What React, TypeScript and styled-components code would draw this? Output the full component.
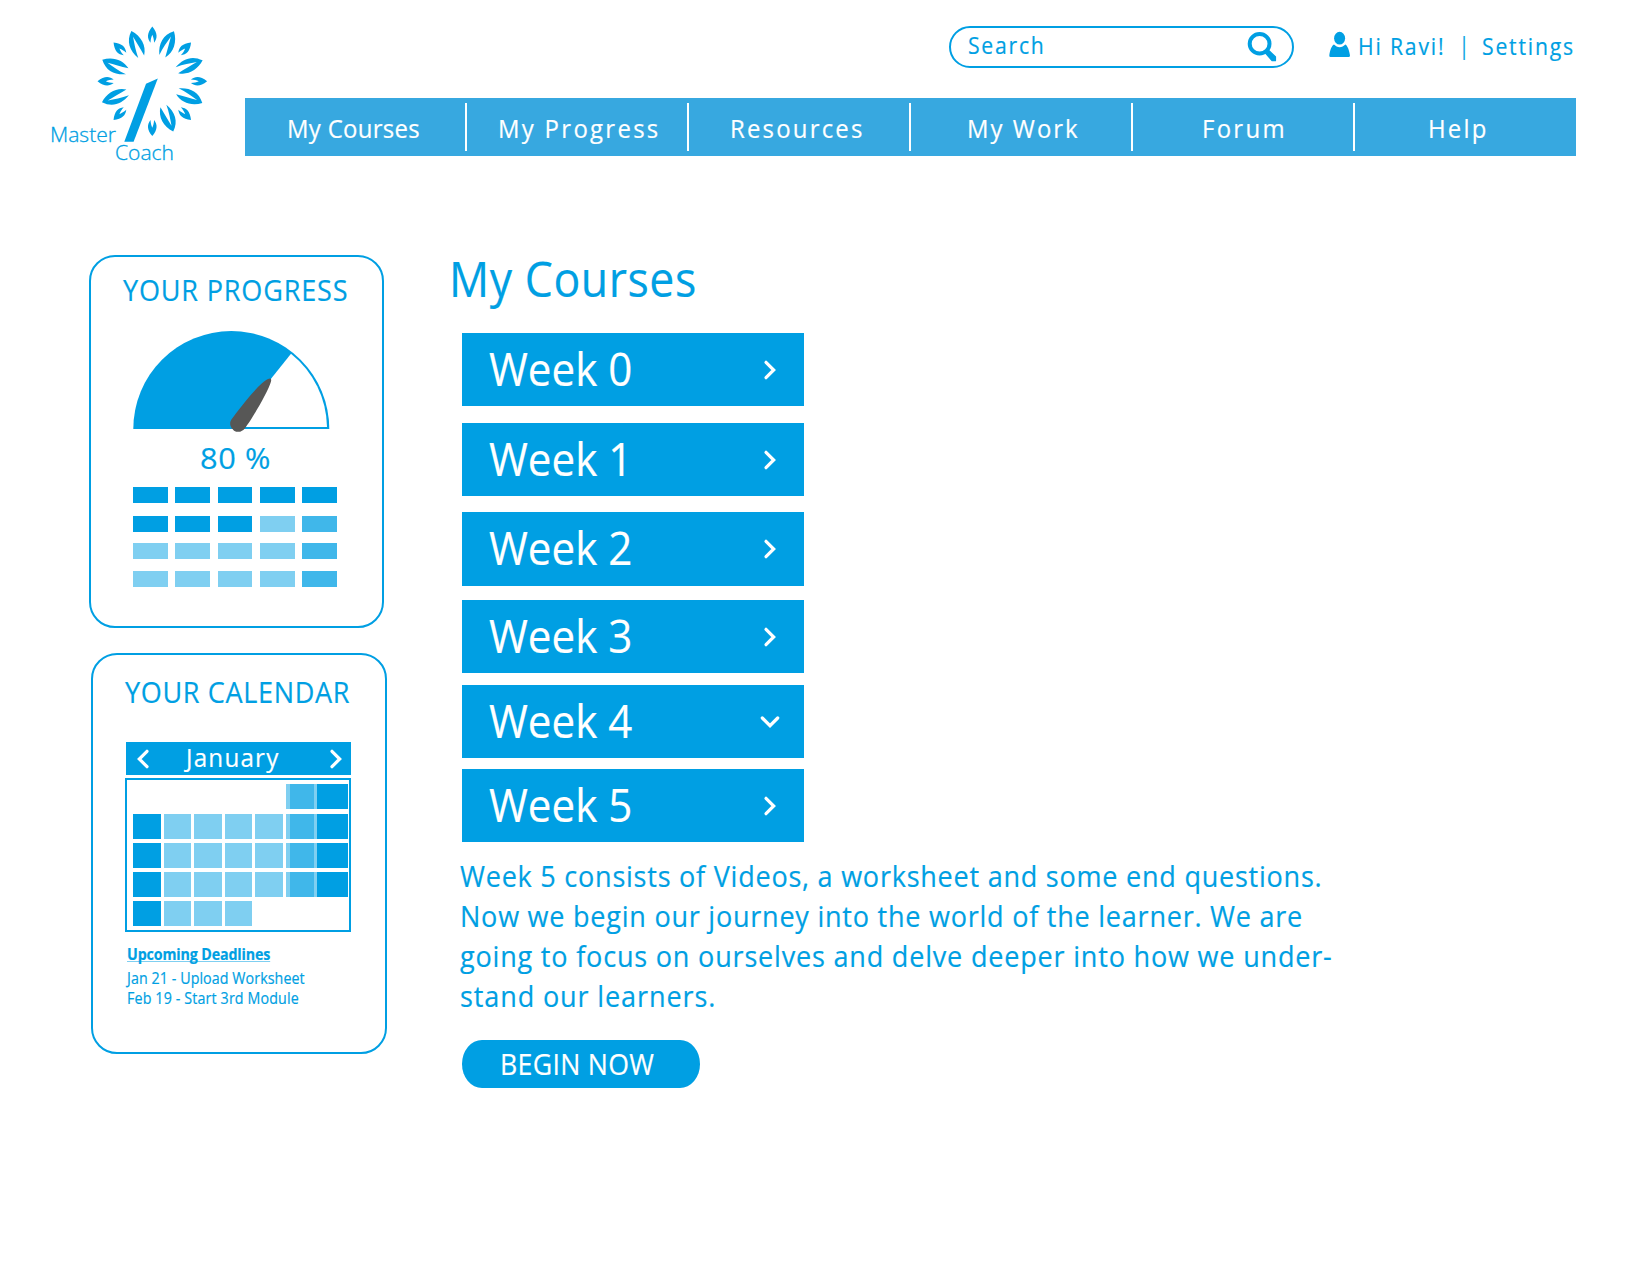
import styled, { createGlobalStyle } from "styled-components";

const BLUE = "#009fe3";
const MID = "#40b7ea";
const PALE = "#7fcff1";

const GlobalStyle = createGlobalStyle`
  body {
    margin: 0;
    background: #fff;
    color: ${BLUE};
    font-family: "Open Sans", "Noto Sans", sans-serif;
  }
  * { box-sizing: border-box; }
`;

const Page = styled.div`
  width: 1650px;
  height: 1275px;
  overflow: hidden;
`;

/* Slightly narrowed lettering used throughout the site. */
const Lettering = styled.span<{
  $size: number;
  $line: number;
  $tracking?: number;
  $squeeze?: number;
}>`
  display: block;
  flex: none;
  white-space: nowrap;
  font-size: ${(p) => p.$size}px;
  line-height: ${(p) => p.$line}px;
  letter-spacing: ${(p) => p.$tracking ?? 0}px;
  -webkit-text-stroke: 0.2px currentColor;
  transform: scaleX(${(p) => p.$squeeze ?? 0.92});
  transform-origin: left center;
`;

/* ---------- header ---------- */

const Header = styled.header`
  display: grid;
  grid-template-columns: 245px 1331px;
  height: 156px;
`;

const LogoBox = styled.div`
  padding: 15px 0 0 40px;
  height: 156px;
  svg { overflow: visible; }
`;

const HeaderRight = styled.div`
  display: flex;
  flex-direction: column;
`;

const TopRow = styled.div`
  display: flex;
  align-items: flex-start;
  height: 98px;
  padding: 26px 0 0 704px;
`;

const SearchBox = styled.div`
  display: flex;
  align-items: flex-start;
  justify-content: space-between;
  flex: none;
  width: 345px;
  height: 42px;
  padding: 0 15px 0 17px;
  border: 2px solid ${BLUE};
  border-radius: 21px;
  svg { margin-top: 4px; }
`;

const UserArea = styled.div`
  display: flex;
  margin-left: 35px;
  svg { margin: 5px 7px 0 0; flex: none; }
`;

const UserItem = styled.div<{ $width: number }>`
  width: ${(p) => p.$width}px;
`;

const Nav = styled.nav`
  display: flex;
  align-items: center;
  height: 58px;
  background: #37a8e0;
`;

const NavItem = styled.a<{ $inset: number; $last?: boolean }>`
  width: ${(p) => (p.$last ? 220 : 222.1)}px;
  height: 48px;
  padding-left: ${(p) => p.$inset}px;
  border-right: ${(p) => (p.$last ? "0" : "2px solid #fff")};
  color: #fff;
`;

/* ---------- columns ---------- */

const Main = styled.main`
  display: flex;
  align-items: flex-start;
`;

const Aside = styled.aside`
  display: flex;
  flex-direction: column;
  gap: 25px;
  width: 448px;
  padding-top: 99px;
`;

const Panel = styled.section<{ $left: number; $width: number; $height: number; $top: number }>`
  width: ${(p) => p.$width}px;
  height: ${(p) => p.$height}px;
  margin-left: ${(p) => p.$left}px;
  padding-top: ${(p) => p.$top}px;
  border: 2px solid ${BLUE};
  border-radius: 26px;
`;

const PanelTitle = styled.div`
  padding-left: 32.3px;
`;

const GaugeBox = styled.div`
  height: 104px;
  margin: 20.5px 0 9px 41px;
  svg { display: block; }
`;

const Percent = styled.div`
  padding-left: 109px;
`;

const BlockGrid = styled.div`
  display: grid;
  grid-template-columns: repeat(5, 34.7px);
  grid-template-rows: 29px 27px 28px 16px;
  column-gap: 7.5px;
  margin: 14px 0 0 42.3px;
`;

const Block = styled.i<{ $tone: string }>`
  height: 15.5px;
  background: ${(p) => p.$tone};
`;

const MonthBar = styled.div`
  display: flex;
  align-items: center;
  justify-content: space-between;
  width: 225px;
  height: 33px;
  margin: 30px 0 3px 33px;
  padding: 0 5px 0 7px;
  background: ${BLUE};
  color: #fff;
`;

const MonthName = styled.div`
  width: 107px;
  margin-top: -3px;
`;

const MonthGrid = styled.div`
  display: grid;
  grid-template-columns: repeat(5, 27.7px) 62px;
  grid-template-rows: 30px 29px 29px 29px 25px;
  column-gap: 2.8px;
  width: 226px;
  height: 154px;
  margin-left: 32.3px;
  padding: 4px 0 0 6px;
  border: 2px solid ${BLUE};
`;

const Day = styled.i<{ $tone: string }>`
  height: 25px;
  background: ${(p) => p.$tone};
`;

const Weekend = styled.i`
  grid-column: 6;
  height: 25px;
  background: linear-gradient(
    90deg,
    ${PALE} 0 4px,
    ${MID} 4px 28px,
    ${PALE} 28px 31px,
    ${BLUE} 31px
  );
`;

const Deadlines = styled.div`
  margin: 11.5px 0 0 33.7px;
`;

const DeadlineHeading = styled.div`
  margin-bottom: 4px;
  font-weight: 700;
  text-decoration: underline 1px ${PALE};
  text-underline-offset: 1px;
  text-decoration-skip-ink: none;
`;

/* ---------- course list ---------- */

const Content = styled.section`
  padding-top: 92px;
`;

const PageTitle = styled.h1`
  margin: 0;
  padding-left: 0.8px;
  font-weight: 400;
`;

const WeekList = styled.div`
  padding: 25px 0 0 14.4px;
`;

const WeekRow = styled.button<{ $gap: number }>`
  display: flex;
  align-items: flex-start;
  justify-content: space-between;
  width: 342px;
  height: 73.3px;
  margin: ${(p) => p.$gap}px 0 0;
  padding: 0 24px 0 26.5px;
  border: 0;
  background: ${BLUE};
  color: #fff;
  font-family: inherit;
  text-align: left;
  svg { margin-top: 27px; flex: none; }
`;

const Description = styled.div`
  padding: 13.5px 0 0 12px;
`;

const BeginButton = styled.button`
  display: block;
  width: 238px;
  height: 48.5px;
  margin: 24px 0 0 14.3px;
  padding: 0 0 1px 38px;
  border: 0;
  border-radius: 20px / 24px;
  background: ${BLUE};
  color: #fff;
  font-family: inherit;
  text-align: left;
`;

/* ---------- drawings ---------- */

const BIG_LEAF =
  "M0.4-54.5C-8.5-47-9-37-3.8-27C-3.4-35-1.8-42-.3-48.5C.6-42 1.6-35 2.6-27C8.5-35 7.5-46 .4-54.5Z";
const SMALL_LEAF =
  "M0-54.8C-5.6-48-5.2-43-1.8-38.6C-1.6-42-1-44 0-46.5C1-44 1.6-42 1.8-38.6C5.2-43 5.6-48 0-54.8Z";

function Logo() {
  return (
    <svg width="200" height="141" viewBox="0 0 200 141" fill={BLUE}>
      <g transform="translate(112.3 66.3)">
        {[0, 45, 90, 135, 180, 225, 270, 315].map((a) => (
          <path key={a} d={SMALL_LEAF} transform={`rotate(${a})`} />
        ))}
        {[23, 67, 113, 157, 247, 293, 337].map((a) => (
          <path key={a} d={BIG_LEAF} transform={`rotate(${a})`} />
        ))}
      </g>
      <path d="M84.3 126.8 106 68.8 117.8 63.6 93.6 126.8Z" />
      <g fontFamily="Open Sans" fontWeight="300" fontSize="20" stroke={BLUE} strokeWidth="0.3">
        <text x="10" y="127.3" textLength="66" lengthAdjust="spacingAndGlyphs">Master</text>
        <text x="75" y="144.7" textLength="59" lengthAdjust="spacingAndGlyphs">Coach</text>
      </g>
    </svg>
  );
}

function Magnifier() {
  return (
    <svg width="30" height="30" viewBox="0 0 30 30" fill="none" stroke={BLUE}>
      <ellipse cx="12.6" cy="11.8" rx="9.9" ry="9.7" strokeWidth="4" />
      <path d="M17.4 19.4 20.4 17.6 28.2 24.8V28.4H25.2Z" fill={BLUE} strokeWidth="1.8" strokeLinejoin="round" />
    </svg>
  );
}

function Person() {
  return (
    <svg width="22" height="27" viewBox="0 0 22 27" fill={BLUE}>
      <ellipse cx="10.6" cy="7.2" rx="5.5" ry="6.4" />
      <path d="M5 13.6C8 17 13.2 17 16.4 13.6C18.5 14.5 20.4 20 21 24.5Q21 26 19.6 26H1.6Q.2 26 .3 24.5C.8 20 2.6 14.5 5 13.6Z" />
    </svg>
  );
}

function Chevron({ turn = 0 }: { turn?: number }) {
  return (
    <svg width="20" height="20" viewBox="0 0 20 20" fill="none" stroke="#fff" strokeWidth="3.2">
      <path d="M6 2.3 13.7 10 6 17.7" strokeLinecap="round" transform={`rotate(${turn} 10 10)`} />
    </svg>
  );
}

function Gauge() {
  return (
    <svg width="200" height="104" viewBox="0 0 200 104">
      <path d="M1.3 99A98 98 0 0 1 197.3 99Z" fill={BLUE} />
      <path d="M100.5 97 159 23.7A96 96 0 0 1 195 97Z" fill="#fff" />
      <path
        d="M99.4 89.5C107 79 127 53 136 49C138.8 47.6 139.6 49 139 51.5C136.5 61 120 89 113.2 98A7.8 7.8 0 0 1 99.4 89.5Z"
        fill="#575756"
      />
    </svg>
  );
}

/* ---------- data ---------- */

const NAV = [
  { label: "My Courses", inset: 42, tracking: 0.35 },
  { label: "My Progress", inset: 31, tracking: 2.5 },
  { label: "Resources", inset: 40.5, tracking: 2.4 },
  { label: "My Work", inset: 56, tracking: 2.2 },
  { label: "Forum", inset: 69, tracking: 2.5 },
  { label: "Help", inset: 72.5, tracking: 2.4 },
];

const BLOCKS = [
  [BLUE, BLUE, BLUE, BLUE, BLUE],
  [BLUE, BLUE, BLUE, PALE, MID],
  [PALE, PALE, PALE, PALE, MID],
  [PALE, PALE, PALE, PALE, MID],
];

const WEEKS = [
  { label: "Week 0", gap: 0 },
  { label: "Week 1", gap: 16.4 },
  { label: "Week 2", gap: 16.4 },
  { label: "Week 3", gap: 14.2 },
  { label: "Week 4", gap: 11.9, open: true },
  { label: "Week 5", gap: 10.8 },
];

const LINES = [
  { text: "Week 5 consists of Videos, a worksheet and some end questions.", tracking: 0.82 },
  { text: "Now we begin our journey into the world of the learner. We are", tracking: 0.82 },
  { text: "going to focus on ourselves and delve deeper into how we under-", tracking: 0.87 },
  { text: "stand our learners.", tracking: 0.95 },
];

export default function App() {
  return (
    <Page>
      <GlobalStyle />
      <Header>
        <LogoBox>
          <Logo />
        </LogoBox>
        <HeaderRight>
          <TopRow>
            <SearchBox>
              <Lettering $size={23} $line={35} $tracking={1.9}>Search</Lettering>
              <Magnifier />
            </SearchBox>
            <UserArea>
              <Person />
              <UserItem $width={100.5}>
                <Lettering $size={23} $line={40} $tracking={2}>Hi Ravi!</Lettering>
              </UserItem>
              <UserItem $width={23}>
                <Lettering $size={23} $line={38} $squeeze={0.8}>|</Lettering>
              </UserItem>
              <UserItem $width={92}>
                <Lettering $size={23} $line={40} $tracking={1.95}>Settings</Lettering>
              </UserItem>
            </UserArea>
          </TopRow>
          <Nav>
            {NAV.map((n, i) => (
              <NavItem key={n.label} $inset={n.inset} $last={i === NAV.length - 1}>
                <Lettering $size={26} $line={50.5} $tracking={n.tracking}>{n.label}</Lettering>
              </NavItem>
            ))}
          </Nav>
        </HeaderRight>
      </Header>

      <Main>
        <Aside>
          <Panel $left={89} $width={295} $height={373} $top={12.5}>
            <PanelTitle>
              <Lettering $size={29.4} $line={40} $tracking={0.9}>YOUR PROGRESS</Lettering>
            </PanelTitle>
            <GaugeBox>
              <Gauge />
            </GaugeBox>
            <Percent>
              <Lettering $size={29} $line={30} $tracking={0.6} $squeeze={1.06}>80 %</Lettering>
            </Percent>
            <BlockGrid>
              {BLOCKS.flat().map((tone, i) => (
                <Block key={i} $tone={tone} />
              ))}
            </BlockGrid>
          </Panel>

          <Panel $left={91} $width={296} $height={401} $top={17}>
            <PanelTitle>
              <Lettering $size={29.4} $line={40} $tracking={0.7}>YOUR CALENDAR</Lettering>
            </PanelTitle>
            <MonthBar>
              <Chevron turn={180} />
              <MonthName>
                <Lettering $size={26} $line={33} $tracking={1.3} $squeeze={0.93}>January</Lettering>
              </MonthName>
              <Chevron />
            </MonthBar>
            <MonthGrid>
              <Weekend />
              {[0, 1, 2].map((row) => [
                ...[BLUE, PALE, PALE, PALE, PALE].map((tone, i) => (
                  <Day key={`${row}-${i}`} $tone={tone} />
                )),
                <Weekend key={`${row}-end`} />,
              ])}
              {[BLUE, PALE, PALE, PALE].map((tone, i) => (
                <Day key={i} $tone={tone} />
              ))}
            </MonthGrid>
            <Deadlines>
              <DeadlineHeading>
                <Lettering $size={15.5} $line={20} $tracking={-0.15}>Upcoming Deadlines</Lettering>
              </DeadlineHeading>
              <Lettering $size={15.5} $line={20} $tracking={0.08}>Jan 21 - Upload Worksheet</Lettering>
              <Lettering $size={15.5} $line={20} $tracking={0.15}>Feb 19 - Start 3rd Module</Lettering>
            </Deadlines>
          </Panel>
        </Aside>

        <Content>
          <PageTitle>
            <Lettering $size={48.5} $line={60} $tracking={0.6}>My Courses</Lettering>
          </PageTitle>
          <WeekList>
            {WEEKS.map((w) => (
              <WeekRow key={w.label} $gap={w.gap}>
                <Lettering $size={46} $line={70.5} $squeeze={0.915}>{w.label}</Lettering>
                <Chevron turn={w.open ? 90 : 0} />
              </WeekRow>
            ))}
          </WeekList>
          <Description>
            {LINES.map((line) => (
              <Lettering key={line.text} $size={29.4} $line={40} $tracking={line.tracking}>{line.text}</Lettering>
            ))}
          </Description>
          <BeginButton>
            <Lettering $size={29} $line={47} $tracking={0.35}>BEGIN NOW</Lettering>
          </BeginButton>
        </Content>
      </Main>
    </Page>
  );
}
